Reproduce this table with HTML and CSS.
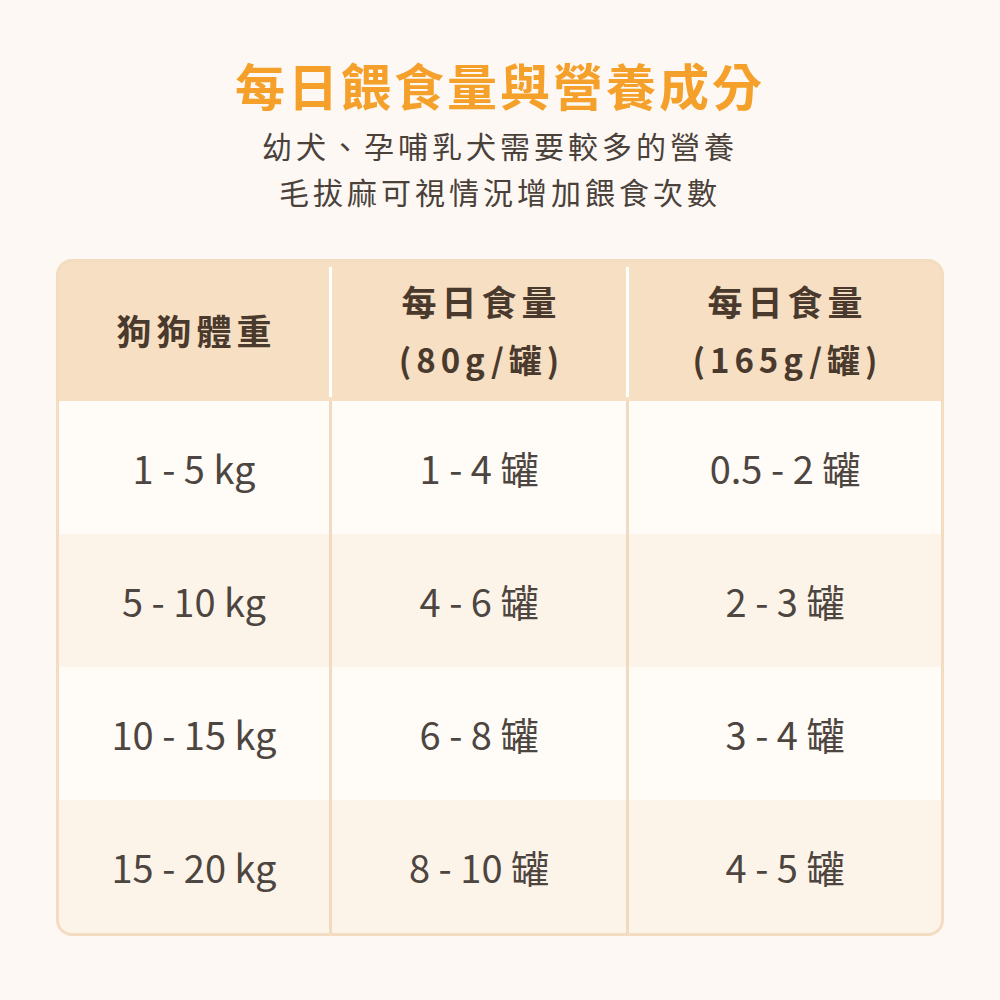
FILE: index.html
```html
<!DOCTYPE html>
<html lang="zh-Hant">
<head>
<meta charset="utf-8">
<link rel="stylesheet" href="styles.css">
</head>
<body>
<main class="page">
  <h1 class="title">每日餵食量與營養成分</h1>
  <p class="subtitle">幼犬、孕哺乳犬需要較多的營養<br>毛拔麻可視情況增加餵食次數</p>
  <div class="table">
    <div class="row head">
      <div class="cell"><span class="l1">狗狗體重</span></div>
      <div class="cell div"><span class="l1">每日食量</span><span class="l2">(80g/罐)</span></div>
      <div class="cell div"><span class="l1">每日食量</span><span class="l2">(165g/罐)</span></div>
    </div>
    <div class="row odd">
      <div class="cell">1 - 5 kg</div>
      <div class="cell">1 - 4 罐</div>
      <div class="cell">0.5 - 2 罐</div>
    </div>
    <div class="row even">
      <div class="cell">5 - 10 kg</div>
      <div class="cell">4 - 6 罐</div>
      <div class="cell">2 - 3 罐</div>
    </div>
    <div class="row odd">
      <div class="cell">10 - 15 kg</div>
      <div class="cell">6 - 8 罐</div>
      <div class="cell">3 - 4 罐</div>
    </div>
    <div class="row even">
      <div class="cell">15 - 20 kg</div>
      <div class="cell">8 - 10 罐</div>
      <div class="cell">4 - 5 罐</div>
    </div>
  </div>
</main>
</body>
</html>
```

FILE: styles.css
```css
html, body {
  margin: 0;
  padding: 0;
  background: #fdf8f3;
}
body {
  font-family: "Noto Sans CJK TC", "Noto Sans", sans-serif;
  color: #4b423c;
}
.page {
  width: 1000px;
  height: 1000px;
  box-sizing: border-box;
  padding-top: 54px;
  display: flex;
  flex-direction: column;
  align-items: center;
}
.title {
  margin: 0;
  font-size: 50px;
  line-height: 60px;
  font-weight: 700;
  letter-spacing: 3px;
  color: #f5a02a;
  text-align: center;
}
.subtitle {
  margin: 8px 0 0;
  font-size: 30px;
  line-height: 46px;
  letter-spacing: 4px;
  text-align: center;
  color: #4a413a;
}
.table {
  margin-top: 45px;
  width: 888px;
  border: 3px solid #f3dcc0;
  border-radius: 16px;
  overflow: hidden;
  background: #f0dbc1;
  box-sizing: border-box;
}
.row {
  display: grid;
  grid-template-columns: 270px 294px 312px;
  column-gap: 3px;
}
.cell {
  display: flex;
  flex-direction: column;
  align-items: center;
  justify-content: center;
  text-align: center;
  font-size: 38px;
  color: #4d4540;
}
.head {
  background: #f7dfc3;
}
.head .cell {
  height: 139px;
  padding-bottom: 3px;
  box-sizing: border-box;
  background: #f7dfc3;
  font-weight: 700;
  color: #4a3a2d;
  position: relative;
}
.l1 {
  font-size: 35px;
  line-height: 58px;
  letter-spacing: 5px;
  margin-right: -5px;
}
.l2 {
  font-size: 33px;
  line-height: 58px;
  letter-spacing: 5px;
  margin-right: -5px;
}
.head .cell.div::before {
  content: "";
  position: absolute;
  left: -3px;
  top: 5px;
  bottom: 4px;
  width: 3px;
  background: #ffffff;
}
.odd .cell {
  height: 133px;
  background: #fffbf6;
}
.even .cell {
  height: 133px;
  background: #fdf4e9;
}
```
